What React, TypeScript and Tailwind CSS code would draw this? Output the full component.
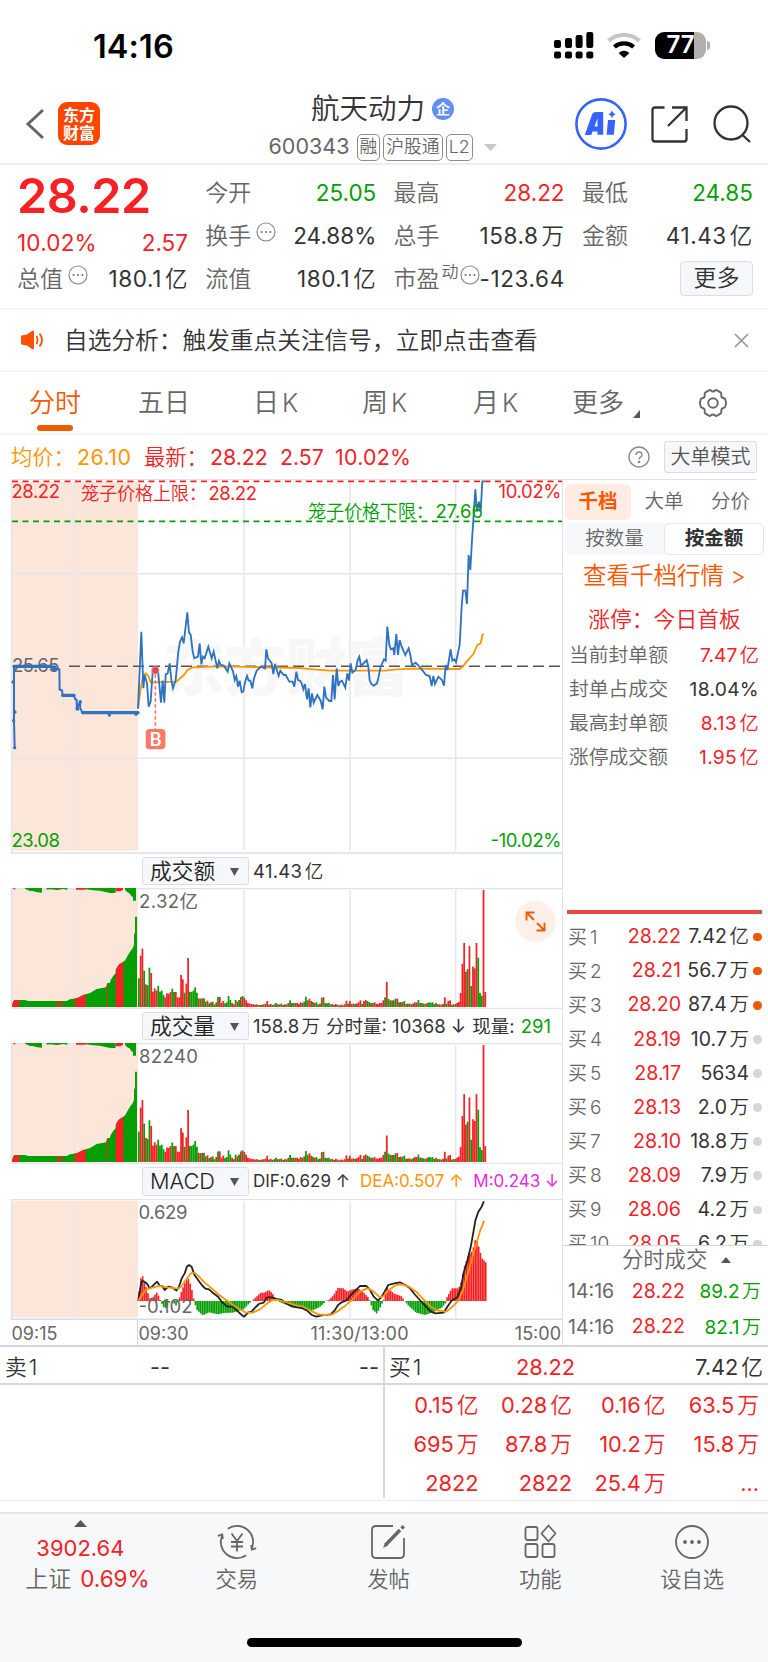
import React from 'react';

const RED = '#f52125';
const GREEN = '#049f04';
const GRID = '#e4e6ee';

const PRICE: number[][] = [
  [414, 836], [424, 605], [430, 775], [434, 735], [441, 760], [446, 830], [452, 815], [458, 725], [466, 712], [474, 722],
  [483, 818], [488, 752], [493, 818], [497, 733], [503, 730], [509, 700], [514, 750], [519, 775], [527, 750], [535, 665],
  [540, 635], [546, 622], [551, 640], [562, 547], [567, 608], [572, 614], [578, 665], [583, 685], [594, 680], [599, 640],
  [604, 703], [609, 680], [614, 685], [625, 650], [635, 685], [641, 665], [652, 715], [657, 693], [662, 705], [672, 707],
  [683, 725], [688, 700], [699, 723], [704, 750], [709, 738], [714, 770], [719, 752], [725, 787], [730, 785], [735, 757],
  [741, 738], [746, 752], [751, 752], [757, 775], [762, 745], [770, 722], [783, 710], [795, 715], [799, 658], [804, 685],
  [815, 700], [820, 732], [825, 702], [836, 738], [841, 722], [851, 735], [857, 735], [868, 755], [878, 755], [883, 770],
  [889, 725], [894, 750], [900, 752], [905, 760], [910, 778], [915, 762], [921, 808], [926, 775], [931, 832], [936, 790],
  [941, 818], [952, 795], [962, 812], [968, 838], [973, 770], [978, 803], [988, 813], [994, 813], [999, 735], [1004, 808],
  [1010, 715], [1015, 768], [1020, 755], [1026, 752], [1036, 773], [1042, 730], [1047, 752], [1052, 700], [1057, 728],
  [1067, 720], [1073, 690], [1078, 680], [1083, 708], [1100, 690], [1105, 710], [1109, 750], [1114, 762], [1121, 767],
  [1131, 760], [1136, 740], [1142, 710], [1152, 688], [1157, 692], [1162, 590], [1168, 645], [1173, 658], [1180, 655],
  [1183, 675], [1189, 612], [1194, 675], [1199, 630], [1205, 650], [1216, 675], [1226, 655], [1231, 675], [1236, 705],
  [1247, 698], [1258, 710], [1268, 722], [1278, 735], [1289, 738], [1295, 768], [1300, 738], [1305, 762], [1315, 740],
  [1326, 750], [1332, 767], [1337, 705], [1342, 720], [1352, 658], [1357, 692], [1363, 688], [1368, 697], [1379, 645],
  [1385, 530], [1389, 482], [1396, 482], [1401, 522], [1406, 375], [1411, 420], [1416, 330], [1422, 240], [1426, 178],
  [1431, 245], [1437, 215], [1442, 245], [1447, 154], [1454, 154],
];

const AVERAGE: number[][] = [
  [414, 836], [422, 775], [430, 735], [437, 730], [446, 740], [452, 757], [530, 755], [540, 745], [552, 735], [562, 720],
  [578, 712], [660, 709], [900, 714], [940, 718], [990, 722], [1050, 722], [1155, 722], [1190, 718], [1240, 716],
  [1380, 717], [1390, 708], [1400, 695], [1420, 672], [1432, 645], [1442, 640], [1447, 615], [1452, 612],
];

const AUCTION: number[][] = [
  [44, 952], [42, 872], [42, 709], [150, 709], [160, 714], [178, 718], [179, 779], [186, 781], [188, 795], [222, 797],
  [226, 808], [230, 810], [231, 836], [240, 815], [241, 836], [248, 848], [414, 849],
];

// One entry per minute: above zero is a rising minute, below zero a falling one.
const MINUTES: number[] = [
  -86, 154, 175, -109, 68, -65, -118, 102, 46, 56, 49, -63, -46, -49, -36, 29, 41, 40, 45, -55,
  -45, 45, 29, 29, 96, 83, -43, 70, 147, -46, -45, -49, -59, -43, 26, -25, 26, -26, -16, 19,
  -11, 14, -16, -8, 14, -30, 30, 12, 18, -11, -14, -33, -21, 12, 8, -21, 16, -21, 30, -33,
  28, 20, 12, 10, 9, 8, 7, 8, -6, 6, 7, -8, 10, 18, -7, 9, -6, 8, -12, -8,
  8, -10, 6, 8, -8, 12, -20, -12, 12, -12, 12, 9, 14, -12, 16, -31, -20, 25, 18, -15,
  12, -14, -8, 10, -28, 29, -12, -11, -12, 8, -9, 6, 9, -7, 5, 7, 5, 8, 19, -10,
  18, 9, 10, -9, 11, 14, 20, -9, 18, 21, -18, -15, 12, -12, 14, 10, 9, 12, 12, 20,
  -29, 75, -24, -20, 20, -20, -25, 25, -14, 15, -15, -18, 9, -10, 10, 8, -11, 14, 14, -21,
  -12, 12, -10, -9, 12, -14, -13, -14, -9, 12, -8, 8, -7, 9, 29, -10, 18, 20, -7, 8,
  -9, 12, 15, 42, 130, 192, 106, -114, 183, -63, 121, 116, 192, -148, -42, -34, 351, 45,
];

const AUCTION_AREA =
  'M36 486 V483 L40 468 L45 465 H75 L85 468 H200 L210 463 L230 460 L240 455 L250 450 L270 444 L290 432 L318 427 L322 414 H330 L332 405 L340 392 L347 385 V375 L352 365 L358 358 L368 352 L376 345 L384 330 L390 320 L398 310 L402 300 V270 L405 262 V215 H411 V486 Z';
const AUCTION_TOP =
  'M75 129 H126 V143 L112 142 L98 138 L90 138 L75 131 Z M140 129 H202 V134 L190 132 L170 135 L150 133 L140 134 Z M257 129 H347 V143 L335 145 L320 142 L300 137 L280 136 L257 133 Z M375 129 H408 V167 H399 V156 L394 154 L390 146 L380 140 L375 134 Z';

const HISTOGRAM: number[][] = [
  [382, 20], [386, 55], [390, 85], [396, 60], [400, 50], [404, 35], [408, 20], [412, 8], [420, 10], [427, 20], [432, 26],
  [438, 12], [442, 0], [450, -18], [458, -22], [463, -8], [470, 0], [480, -8], [485, -14], [492, 3], [500, 30], [507, 50],
  [517, 70], [524, 50], [530, 25], [535, -5], [543, -28], [558, -43], [575, -34], [600, -40], [615, -36], [640, -35],
  [670, -25], [685, -8], [695, 2], [705, 12], [718, 26], [725, 24], [740, 33], [750, 22], [757, 8], [765, 0], [775, -6],
  [800, -16], [830, -20], [860, -28], [880, -18], [890, -8], [896, 0], [905, 3], [918, 18], [930, 39], [945, 38],
  [955, 28], [970, 35], [985, 38], [1000, 26], [1012, 12], [1018, 0], [1025, -25], [1037, -38], [1048, -15], [1056, 5],
  [1065, 40], [1085, 22], [1105, 14], [1113, 0], [1125, -15], [1145, -35], [1170, -42], [1195, -32], [1215, -20],
  [1225, -8], [1230, 12], [1243, 38], [1262, 38], [1270, 60], [1278, 105], [1290, 140], [1300, 150], [1309, 190],
  [1318, 160], [1326, 128], [1340, 112],
];

const DIF: number[][] = [
  [380, 423], [388, 370], [392, 362], [400, 367], [405, 372], [412, 385], [418, 380], [432, 365], [440, 378], [446, 378],
  [453, 390], [463, 380], [475, 383], [485, 392], [492, 382], [500, 355], [508, 340], [514, 320], [520, 315], [527, 320],
  [535, 345], [545, 360], [555, 375], [565, 386], [575, 388], [585, 398], [600, 410], [612, 428], [625, 440], [640, 440],
  [655, 455], [665, 465], [672, 470], [682, 458], [692, 455], [700, 445], [712, 432], [725, 428], [735, 412], [748, 412],
  [760, 417], [775, 420], [790, 432], [805, 440], [830, 444], [845, 452], [858, 465], [870, 470], [885, 466], [910, 463],
  [920, 452], [930, 435], [940, 427], [955, 420], [965, 405], [978, 392], [990, 378], [1008, 378], [1018, 390],
  [1028, 410], [1040, 422], [1050, 410], [1058, 395], [1068, 375], [1085, 370], [1100, 367], [1115, 375], [1128, 385],
  [1140, 402], [1155, 420], [1165, 432], [1175, 443], [1185, 455], [1198, 460], [1220, 458], [1232, 438], [1242, 422],
  [1258, 412], [1268, 385], [1275, 340], [1285, 305], [1295, 260], [1300, 230], [1308, 180], [1316, 155], [1325, 140],
  [1331, 124],
];

const DEA: number[][] = [
  [380, 423], [390, 405], [403, 388], [430, 380], [440, 378], [460, 382], [490, 386], [500, 378], [515, 355], [525, 340],
  [535, 338], [545, 347], [560, 365], [580, 383], [600, 402], [625, 422], [645, 438], [660, 448], [675, 457], [695, 458],
  [715, 448], [735, 430], [750, 420], [765, 420], [790, 427], [815, 436], [835, 440], [855, 452], [875, 463], [895, 465],
  [915, 463], [930, 453], [950, 437], [970, 418], [990, 395], [1010, 385], [1025, 392], [1045, 412], [1055, 408],
  [1070, 390], [1090, 375], [1105, 373], [1125, 380], [1145, 395], [1165, 418], [1185, 440], [1205, 452], [1228, 455],
  [1245, 440], [1262, 420], [1275, 385], [1290, 330], [1305, 270], [1320, 215], [1332, 182],
];

const line = (pts: number[][]) => pts.map((p) => p.join(',')).join(' ');

function valueAt(pts: number[][], x: number) {
  for (let i = 1; i < pts.length; i++) {
    if (x <= pts[i][0]) {
      const [x0, y0] = pts[i - 1];
      const [x1, y1] = pts[i];
      return y0 + ((y1 - y0) * (x - x0)) / (x1 - x0);
    }
  }
  return pts[pts.length - 1][1];
}

/** A figure whose unit (万, 亿) stands a little apart from the digits. */
function Amount({ value }: { value: string }) {
  const unit = value.match(/[万亿]$/)?.[0];
  if (!unit) return <>{value}</>;
  return (
    <>
      {value.slice(0, -1)}
      <span className="ml-[0.13em] font-[350]">{unit}</span>
    </>
  );
}

function Dots({ className = '' }: { className?: string }) {
  return (
    <svg className={className} width="20" height="20" viewBox="0 0 20 20" fill="none">
      <circle cx="10" cy="10" r="9" stroke="#8a8a8a" strokeWidth="1.2" />
      <circle cx="5.6" cy="10" r="1.1" fill="#777" />
      <circle cx="10" cy="10" r="1.1" fill="#777" />
      <circle cx="14.4" cy="10" r="1.1" fill="#777" />
    </svg>
  );
}

function StatusBar() {
  return (
    <div className="flex h-[82px] items-start justify-between pr-[58px] pl-[93px]">
      <div className="mt-[30px] text-[32.500px] leading-[33px] font-semibold tracking-[0.1px] text-black">14:16</div>
      <div className="mt-[31px] flex items-center">
        <svg width="40" height="28" viewBox="0 0 40 28" fill="#000">
          <rect x="0" y="9" width="7" height="8" rx="2" />
          <rect x="11" y="7" width="7" height="10" rx="2" />
          <rect x="21.600" y="4" width="7" height="13" rx="2" />
          <rect x="32.300" y="1" width="7" height="16" rx="2" />
          <rect x="0" y="20.500" width="7" height="7" rx="2" />
          <rect x="11" y="20.500" width="7" height="7" rx="2" />
          <rect x="21.600" y="20.500" width="7" height="7" rx="2" />
          <rect x="32.300" y="20.500" width="7" height="7" rx="2" />
        </svg>
        <svg className="ml-[12px]" width="36" height="28" viewBox="0 0 36 28" fill="none" strokeWidth="4.200">
          <path d="M2.500 9.800 A23 23 0 0 1 33.500 9.800" stroke="#c6c6c6" />
          <path d="M8.400 16 A14.500 14.500 0 0 1 27.600 16" stroke="#000" />
          <path d="M12.600 22 Q18 17.500 23.400 22 L18 27 Z" fill="#000" stroke="none" />
        </svg>
        <div className="ml-[13px] flex items-center">
          <div className="flex h-[27px] w-[51px] items-center justify-center overflow-hidden rounded-[9px] bg-[linear-gradient(to_right,#000_39px,#b0b0b0_39px)] text-[24px] leading-none font-semibold text-white">
            <span className="-mr-[1px]">77</span>
          </div>
          <div className="ml-[1.500px] h-[9px] w-[3px] rounded-r-full bg-[#b0b0b0]" />
        </div>
      </div>
    </div>
  );
}

function Tag({ children }: { children: React.ReactNode }) {
  return (
    <span className="flex h-[27px] items-center rounded-[5px] border border-[#8c8c8c] px-[2px] text-[17.800px] leading-none font-[350] text-[#666]">
      {children}
    </span>
  );
}

function Header() {
  return (
    <div className="flex h-[83px] border-b-2 border-[#ededed] pl-[25px]">
      <svg className="mt-[26px]" width="20" height="32" viewBox="0 0 20 32" fill="none" stroke="#666" strokeWidth="3">
        <path d="M18 2 L3 16 L18 30" />
      </svg>
      <div className="mt-[20px] ml-[13px] flex h-[43px] w-[42px] flex-col items-center justify-center rounded-[9px] bg-[#ff4400] text-[16px] leading-[18px] font-bold text-white">
        <span>东方</span>
        <span>财富</span>
      </div>
      <div className="flex w-[430px] flex-col">
        <div className="mt-[10px] flex h-[34px] items-center pl-[211px]">
          <span className="text-[28.500px] leading-none font-[350] text-[#333]">航天动力</span>
          <span className="ml-[7px] flex h-[22px] w-[22px] items-center justify-center rounded-full bg-[#5f8ff0] text-[14px] leading-none font-bold text-white">
            企
          </span>
        </div>
        <div className="mt-[6px] flex h-[30px] items-center gap-[3px] pl-[168.500px] whitespace-nowrap text-[#666]">
          <span className="mr-[3px] w-[82px] text-[21.500px] leading-none">600343</span>
          <Tag>融</Tag>
          <Tag>沪股通</Tag>
          <Tag>L2</Tag>
          <svg className="ml-[8px]" width="13" height="7" viewBox="0 0 13 7">
            <path d="M0 0 H13 L6.500 7 Z" fill="#c8c8c8" />
          </svg>
        </div>
      </div>
      <div className="mt-[16px] ml-[45px] flex h-[52px] items-center">
        <svg width="52" height="52" viewBox="0 0 52 52">
          <circle cx="26" cy="26" r="24.600" fill="#fff" stroke="#3563ff" strokeWidth="2.600" />
          <path
            d="M9.800 37 L17 16.500 Q18 14 20.500 14 H28.200 V36.800 H22.500 V33.500 H17.500 L16.300 37 Z M19.500 28.500 H22.500 V20.500 Z"
            fill="#3563ff"
            fillRule="evenodd"
          />
          <path d="M33 22 H40.200 L38.800 36.800 H31.600 Z" fill="#3563ff" />
          <path d="M37 12 Q37.600 15.500 41 16.200 Q37.600 17 37 20.500 Q36.400 17 33 16.200 Q36.400 15.500 37 12 Z" fill="#3563ff" />
        </svg>
        <svg className="ml-[24px]" width="37" height="37" viewBox="0 0 37 37" fill="none" stroke="#333" strokeWidth="2.300">
          <path d="M13.500 1.500 H4 Q1.500 1.500 1.500 4 V33 Q1.500 35.500 4 35.500 H33 Q35.500 35.500 35.500 33 V23" />
          <path d="M21 1.500 H35.500 V15 M35 2 L17 20" />
        </svg>
        <svg className="ml-[25px]" width="38" height="38" viewBox="0 0 38 38" fill="none" stroke="#333" strokeWidth="2.300">
          <circle cx="18" cy="18" r="16.500" />
          <path d="M29 29.500 L37 37" />
        </svg>
      </div>
    </div>
  );
}

function Stat({ label, value, color = 'text-[#333]', extra }: { label: string; value: string; color?: string; extra?: React.ReactNode }) {
  return (
    <div className="flex h-[43px] items-center justify-between">
      <div className="flex items-center text-[23px] leading-none font-[350] text-[#666]">
        {label}
        {extra}
      </div>
      <div className={`text-[22.500px] leading-none ${value.includes('1') ? 'tracking-[0.600px]' : ''} ${color}`}>
        <Amount value={value} />
      </div>
    </div>
  );
}

function Quote() {
  return (
    <div className="flex h-[145px] gap-[17.300px] border-b-2 border-[#f5f5f5] pt-[7px] pl-[17px] whitespace-nowrap">
      <div className="w-[171px]">
        <div className="flex h-[52px] items-center pb-[4px] text-[48.500px] leading-none font-semibold tracking-[-0.5px] text-[#f52125]">
          28.22
        </div>
        <div className="flex h-[34px] items-center justify-between pt-[4px] text-[22.500px] leading-none text-[#f52125]">
          <span className="tracking-[0.200px]">10.02%</span>
          <span>2.57</span>
        </div>
        <Stat label="总值" value="180.1亿" extra={<Dots className="-mt-[10px] ml-[5px]" />} />
      </div>
      <div className="w-[171px]">
        <Stat label="今开" value="25.05" color="text-[#049f04]" />
        <Stat label="换手" value="24.88%" extra={<Dots className="-mt-[10px] ml-[5px]" />} />
        <Stat label="流值" value="180.1亿" />
      </div>
      <div className="w-[171px]">
        <Stat label="最高" value="28.22" color="text-[#f52125]" />
        <Stat label="总手" value="158.8万" />
        <Stat
          label="市盈"
          value="-123.64"
          extra={
            <>
              <span className="-mt-[14px] ml-[2px] text-[17px]">动</span>
              <Dots className="-mt-[10px] ml-[1px]" />
            </>
          }
        />
      </div>
      <div className="w-[171px]">
        <Stat label="最低" value="24.85" color="text-[#049f04]" />
        <Stat label="金额" value="41.43亿" />
        <div className="flex h-[41px] items-center justify-end">
          <div className="flex h-[35px] w-[73px] items-center justify-center rounded-[4px] border border-[#d9dde5] bg-[#f6f7fa] text-[23px] leading-none font-[350] text-[#333]">
            更多
          </div>
        </div>
      </div>
    </div>
  );
}

function Notice() {
  return (
    <div className="flex h-[62px] items-center border-b-2 border-[#f5f5f5] pl-[20px]">
      <svg width="24" height="20" viewBox="0 0 24 20" fill="none">
        <path d="M1 6.500 Q1 5.500 2.500 5.300 L7 4.500 L12 1 Q14 0 14 2 V18 Q14 20 12 19 L7 15.500 L2.500 14.700 Q1 14.500 1 13.500 Z" fill="#ff5000" />
        <path d="M16.500 6 Q18.500 10 16.500 14 M19.500 3.500 Q24.500 10 19.500 16.500" stroke="#ff5000" strokeWidth="1.800" />
      </svg>
      <div className="ml-[20px] flex-1 pt-[1px] text-[23.700px] leading-none font-[350] whitespace-nowrap text-[#333]">
        自选分析：触发重点关注信号，立即点击查看
      </div>
      <svg className="mr-[19px]" width="15" height="15" viewBox="0 0 15 15" stroke="#999" strokeWidth="1.700">
        <path d="M1 1 L14 14 M14 1 L1 14" />
      </svg>
    </div>
  );
}

function PeriodTab({ label, className }: { label: string; className: string }) {
  return (
    <div className={`flex shrink-0 justify-center pt-[1px] ${className}`}>
      {label}
      <span className="ml-[3px] text-[25px] leading-[26px]">K</span>
    </div>
  );
}

function Tabs() {
  return (
    <div className="flex h-[63px] items-center border-b-2 border-[#f5f5f5] text-[26px] leading-none font-[350] whitespace-nowrap text-[#666]">
      <div className="flex h-full w-[110px] flex-col items-center pt-[18px] text-[#f05a00]">
        <span>分时</span>
        <span className="mt-[9px] h-[5.500px] w-[36px] rounded-full bg-[#f05a00]" />
      </div>
      <div className="w-[108px] pt-[1px] text-center">五日</div>
      <PeriodTab label="日" className="w-[115px]" />
      <PeriodTab label="周" className="w-[103px]" />
      <PeriodTab label="月" className="w-[119px]" />
      <div className="flex w-[85px] items-end pt-[1px] pl-[17px]">
        更多
        <svg className="-mb-[2px] ml-[9px]" width="7" height="8" viewBox="0 0 7 8">
          <path d="M7 0 V8 H0 Z" fill="#555" />
        </svg>
      </div>
      <svg className="ml-[58px]" width="30" height="30" viewBox="0 0 30 30" fill="none" stroke="#666" strokeWidth="1.900">
        <path d="M10.500 2.600 Q12 1.500 12.800 2.500 Q15 4.600 17.200 2.500 Q18 1.500 19.500 2.600 L22.500 4.300 Q23.600 5 23.300 6.300 Q22.700 9.600 26 10.300 Q27.300 10.600 27.400 12 Q28.800 15 27.400 18 Q27.300 19.400 26 19.700 Q22.700 20.400 23.300 23.700 Q23.600 25 22.500 25.700 L19.500 27.400 Q18 28.500 17.200 27.500 Q15 25.400 12.800 27.500 Q12 28.500 10.500 27.400 L7.500 25.700 Q6.400 25 6.700 23.700 Q7.300 20.400 4 19.700 Q2.700 19.400 2.600 18 Q1.200 15 2.600 12 Q2.700 10.600 4 10.300 Q7.300 9.600 6.700 6.300 Q6.400 5 7.500 4.300 Z" />
        <circle cx="15" cy="15" r="4.800" />
      </svg>
    </div>
  );
}

function InfoRow() {
  return (
    <div className="mr-[11px] ml-[11px] flex h-[45px] items-center border-b border-[#dfe2ea] text-[21.300px] leading-none whitespace-nowrap">
      <div className="flex flex-1 items-center pt-[2px] text-[#f52125]">
        <span className="w-[66px] font-[350] text-[#ff9500]">均价：</span>
        <span className="w-[67px] tracking-[0.500px] text-[#ff9500]">26.10</span>
        <span className="w-[66px] font-[350]">最新：</span>
        <span className="w-[70px]">28.22</span>
        <span className="w-[55px]">2.57</span>
        <span className="tracking-[0.300px]">10.02%</span>
      </div>
      <svg width="22" height="22" viewBox="0 0 22 22" fill="none" stroke="#8a8a8a" strokeWidth="1.400">
        <circle cx="11" cy="11" r="10" />
        <path d="M8 9 Q8 6 11 6 Q14 6 14 8.700 Q14 10.300 12.500 11.200 Q11 12 11 13.500" />
        <circle cx="11" cy="16" r="0.600" fill="#8a8a8a" />
      </svg>
      <div className="ml-[14px] flex h-[32px] w-[93px] items-center justify-center rounded-[3px] border border-[#d9dde5] bg-[#f6f7fa] text-[20px] font-[350] text-[#555]">
        大单模式
      </div>
    </div>
  );
}

function PriceChart() {
  return (
    <svg className="block" width="562" height="374" viewBox="0 480 562 374">
      <rect x="12" y="482" width="126" height="368.700" fill="#fce6da" />
      <g stroke={GRID} strokeWidth="1.500">
        <path d="M11.500 480 V853 M74.700 482 V850.700 M244 482 V850.700 M350 482 V850.700 M455.700 482 V850.700" />
        <path d="M12 573.700 H562 M12 758.300 H562" />
        <path d="M11 853 H562" stroke="#dcdfe8" />
      </g>
      <text x="163" y="691" fontSize="62" fontWeight="900" fill="#f7f7f8" textLength="246">
        东方财富
      </text>
      <path d="M12 481.300 H562" stroke={RED} strokeWidth="1.700" strokeDasharray="6 4.500" />
      <path d="M12 521.300 H562" stroke={GREEN} strokeWidth="1.700" strokeDasharray="6 4.500" />
      <text x="12" y="672" fontSize="18.500" fill="#666" textLength="47.500">
        25.65
      </text>
      <path d="M69 666.300 H562" stroke="#555" strokeWidth="1.500" strokeDasharray="11 5" />
      <g transform="translate(0 430) scale(0.33333)" fill="none" strokeLinejoin="round">
        <polyline points={line(AVERAGE)} stroke="#ff9500" strokeWidth="5.500" />
        <polyline points={line(PRICE)} stroke="#2f72c2" strokeWidth="5.500" strokeLinejoin="miter" />
        <polyline points={line(AUCTION)} stroke="#2f72c2" strokeWidth="6" />
        <path d="M42 709 H152 M188 796 H222 M248 848 H414" stroke="#2f72c2" strokeWidth="10" strokeLinecap="round" />
        <g fill="#2f72c2">
          <circle cx="39" cy="756" r="5" />
          <circle cx="45" cy="846" r="5" />
          <circle cx="41" cy="872" r="5" />
          <circle cx="44" cy="953" r="5" />
          <circle cx="328" cy="855" r="5" />
          <circle cx="408" cy="853" r="5" />
          <circle cx="232" cy="836" r="6" />
          <circle cx="241" cy="815" r="5" />
          <circle cx="162" cy="714" r="8" />
        </g>
        <path d="M466 733 V897" stroke="#f5746a" strokeWidth="5" strokeDasharray="10 8" />
        <circle cx="466" cy="721" r="11" fill="#e0484c" stroke="#f0908c" strokeWidth="3" />
      </g>
      <rect x="145.700" y="729" width="19.700" height="20.300" rx="4" fill="#ff7767" />
      <text x="155.600" y="745.500" fontSize="18" fontWeight="600" fill="#fff" textAnchor="middle">
        B
      </text>
      <text x="11.500" y="498" fontSize="18.500" fill={RED} textLength="48.500">
        28.22
      </text>
      <text x="81" y="499.500" fontSize="18.200" fill={RED} textLength="126" fontWeight="350">
        笼子价格上限：
      </text>
      <text x="208.500" y="499.500" fontSize="18.500" fill={RED} textLength="48.500">
        28.22
      </text>
      <text x="308" y="518" fontSize="18.200" fill={GREEN} textLength="126" fontWeight="350">
        笼子价格下限：
      </text>
      <text x="435.500" y="518" fontSize="18.500" fill={GREEN} textLength="47.500">
        27.66
      </text>
      <text x="561.500" y="498" fontSize="18.500" fill={RED} textAnchor="end" textLength="63">
        10.02%
      </text>
      <text x="11.500" y="846.500" fontSize="18.500" fill={GREEN} textLength="48.500">
        23.08
      </text>
      <text x="561.500" y="846.500" fontSize="18.500" fill={GREEN} textAnchor="end" textLength="71">
        -10.02%
      </text>
    </svg>
  );
}

function IndicatorBar({ name, height, children }: { name: string; height: string; children: React.ReactNode }) {
  return (
    <div className={`flex items-center pl-[142px] whitespace-nowrap ${height}`}>
      <div className="flex h-[28.500px] w-[107px] shrink-0 items-center rounded-[3px] border border-[#d9dde5] bg-[#f6f7fa] pt-[1px] pr-[9px] pl-[7px] text-[21.700px] leading-none font-[350] text-[#222]">
        <span className="flex-1">{name}</span>
        <svg width="9" height="8" viewBox="0 0 9 8">
          <path d="M0 0 H9 L4.500 8 Z" fill="#555" />
        </svg>
      </div>
      <div className="flex items-center pl-[4px] text-[18.500px] leading-none text-[#333]">{children}</div>
    </div>
  );
}

function VolumeChart({ id, label, factor }: { id: string; label: string; factor: number }) {
  return (
    <svg className="block" width="562" height="121" viewBox="0 888 562 121">
      <rect x="12" y="888.500" width="126" height="119" fill="#fce6da" />
      <g stroke={GRID} strokeWidth="1.500">
        <path d="M11 888.500 H562 M11.500 888 V1009" stroke="#dfe2ea" />
        <path d="M74.700 889 V1007 M244 890 V1007 M350 890 V1007 M455.700 890 V1007" />
        <path d="M11 1008.500 H562" />
      </g>
      <g transform="translate(0 845) scale(0.33333)">
        <clipPath id={id}>
          <path d={AUCTION_AREA} />
        </clipPath>
        <path d={AUCTION_AREA} fill={GREEN} />
        <g clipPath={`url(#${id})`} fill={RED}>
          <rect x="36" y="200" width="21" height="290" />
          <rect x="172" y="200" width="8" height="290" />
          <rect x="187" y="200" width="3" height="290" />
          <rect x="225" y="200" width="32" height="290" />
          <rect x="320" y="200" width="3" height="290" />
          <rect x="347" y="200" width="23" height="290" />
        </g>
        <path d={AUCTION_TOP} fill={GREEN} />
        <path d="M228 129 H257 V134 H228 Z M347 129 H369 V135 L360 139 H347 Z M172 129 H178 V134 H172 Z M40 129 H46 V133 H40 Z" fill={RED} />
        {MINUTES.map((v, i) => {
          const h = Math.min(351, Math.abs(v) * factor);
          return <rect key={i} x={414 + i * 5.275} y={486 - h} width="5.300" height={h} fill={v > 0 ? RED : GREEN} />;
        })}
      </g>
      <text x="139" y="908" fontSize="18.500" fill="#666" letterSpacing="0.400" fontWeight="370">
        {label}
      </text>
    </svg>
  );
}

function MacdChart() {
  return (
    <svg className="block" width="562" height="121" viewBox="0 1199 562 121">
      <rect x="12" y="1200.500" width="126" height="117" fill="#fce6da" />
      <g stroke={GRID} strokeWidth="1.500">
        <path d="M11 1199.300 H562 M11.500 1199 V1320" stroke="#dfe2ea" />
        <path d="M74.700 1201 V1318 M244 1201 V1318 M350 1201 V1318 M455.700 1201 V1318" />
        <path d="M11 1319.300 H562" stroke="#d9dce6" />
      </g>
      <g transform="translate(0 1160) scale(0.36352 0.33333)" fill="none">
        {MINUTES.map((_, i) => {
          const x = 380.5 + i * 4.84;
          const v = valueAt(HISTOGRAM, x + 2.4);
          return (
            <rect key={i} x={x} y={v > 0 ? 423 - v : 423} width="4.500" height={Math.abs(v)} fill={v > 0 ? RED : GREEN} />
          );
        })}
        <polyline points={line(DIF)} stroke="#222" strokeWidth="1.800" strokeLinejoin="round" vectorEffect="non-scaling-stroke" />
        <polyline points={line(DEA)} stroke="#ff9500" strokeWidth="1.800" strokeLinejoin="round" vectorEffect="non-scaling-stroke" />
      </g>
      <text x="138.500" y="1219" fontSize="18.500" fill="#666" textLength="49">
        0.629
      </text>
      <text x="138.500" y="1312.500" fontSize="18.500" fill="#666" textLength="54">
        -0.102
      </text>
    </svg>
  );
}

function Charts() {
  return (
    <div className="relative w-[562px]">
      <PriceChart />
      <IndicatorBar name="成交额" height="h-[34px]">
        <span className="tracking-[0.300px]">
          <Amount value="41.43亿" />
        </span>
      </IndicatorBar>
      <VolumeChart id="auction-amount" label="2.32亿" factor={1} />
      <IndicatorBar name="成交量" height="h-[34px]">
        <span>
          <Amount value="158.8万" />
        </span>
        <span className="ml-[6px]">分时量: 10368 ↓</span>
        <span className="ml-[6px]">现量:</span>
        <span className="ml-[6px] text-[#049f04]">291</span>
      </IndicatorBar>
      <VolumeChart id="auction-volume" label="82240" factor={1.06} />
      <IndicatorBar name="MACD" height="h-[35px]">
        <span className="text-[17px]">DIF:0.629 ↑</span>
        <span className="ml-[10px] text-[17px] text-[#ff9500]">DEA:0.507 ↑</span>
        <span className="ml-[10px] text-[17px] text-[#e22be2]">M:0.243 ↓</span>
      </IndicatorBar>
      <MacdChart />
      <div className="flex h-[26px] items-center pl-[11.500px] text-[18px] leading-none text-[#666]">
        <div className="flex h-full w-[126px] items-center border-r border-[#d4d7de] pt-[1px]">09:15</div>
        <div className="w-[173px] pt-[2px] pl-[1px]">09:30</div>
        <div className="flex-1 pt-[2px] tracking-[0.300px]">11:30/13:00</div>
        <div className="pt-[2px] pr-[1px]">15:00</div>
      </div>
      <div className="absolute top-[421px] left-[515px] flex h-[41px] w-[41px] items-center justify-center rounded-full bg-[#fdf0ea]">
        <svg width="21" height="21" viewBox="0 0 21 21" fill="none" stroke="#f05a00" strokeWidth="1.900">
          <path d="M1.500 9.500 V1.500 H9.500 M1.500 1.500 L9 9 M19.500 11.500 V19.500 H11.500 M19.500 19.500 L12 12" />
        </svg>
      </div>
    </div>
  );
}

const SEALS = [
  ['当前封单额', '7.47亿', 'text-[#f52125]'],
  ['封单占成交', '18.04%', 'text-[#333]'],
  ['最高封单额', '8.13亿', 'text-[#f52125]'],
  ['涨停成交额', '1.95亿', 'text-[#f52125]'],
];

const BIDS = [
  ['1', '28.22', '7.42亿'],
  ['2', '28.21', '56.7万'],
  ['3', '28.20', '87.4万'],
  ['4', '28.19', '10.7万'],
  ['5', '28.17', '5634'],
  ['6', '28.13', '2.0万'],
  ['7', '28.10', '18.8万'],
  ['8', '28.09', '7.9万'],
  ['9', '28.06', '4.2万'],
  ['10', '28.05', '6.2万'],
];

function SidePanel() {
  return (
    <div className="flex w-[206px] flex-col border-l border-[#dfe2ea] leading-none whitespace-nowrap [&>*]:shrink-0">
      <div className="mt-[4px] ml-[2px] flex h-[36px] w-[199px] items-center text-[19.500px] font-[350] text-[#666]">
        <div className="flex h-full w-[66px] items-center justify-center rounded-[6px] bg-[#ffece2] font-bold text-[#ff5500]">千档</div>
        <div className="w-[66px] text-center">大单</div>
        <div className="w-[67px] text-center">分价</div>
      </div>
      <div className="mt-[3px] ml-[2px] flex h-[32px] w-[199px] items-center rounded-[6px] bg-[#f6f7fa] text-[19.500px] font-[350] text-[#666]">
        <div className="w-[99px] text-center">按数量</div>
        <div className="flex h-full w-[100px] items-center justify-center rounded-[6px] border border-[#e6e6ea] bg-white font-bold text-[#333]">
          按金额
        </div>
      </div>
      <div className="flex h-[42px] items-center justify-center pr-[2px] text-[23.500px] font-[350] text-[#ff5500]">查看千档行情 &gt;</div>
      <div className="flex h-[42px] items-center justify-center pt-[4px] pr-[2px] text-[21.800px] font-[350] text-[#f52125]">涨停：今日首板</div>
      <div className="h-[136px] pr-[9px] pl-[6px]">
        {SEALS.map(([label, value, color]) => (
          <div key={label} className="flex h-[34px] items-center justify-between">
            <span className="text-[19.800px] font-[350] text-[#666]">{label}</span>
            <span className={`text-[19.200px] ${value.includes('1') ? 'tracking-[0.300px]' : ''} ${color}`}>
              <Amount value={value} />
            </span>
          </div>
        ))}
      </div>
      <div className="mt-[135px] ml-[4px] h-[4px] w-[195px] bg-[#ea4545]" />
      <div className="mt-[6px] h-[325px] overflow-hidden pl-[5px]">
        {BIDS.map(([level, price, qty], i) => (
          <div key={level} className="flex h-[34.100px] items-center">
            <span className="w-[46px] text-[19px] font-[350] text-[#666]">
              买<span className="ml-[3px]">{level}</span>
            </span>
            <span className="w-[67px] text-right text-[19.600px] text-[#f52125]">{price}</span>
            <span className="w-[68px] text-right text-[19.500px] text-[#333]">
              <Amount value={qty} />
            </span>
            <span className={`ml-[4px] h-[8.600px] w-[8.600px] rounded-full ${i < 3 ? 'bg-[#eb5a00]' : 'bg-[#d3d6dc]'}`} />
          </div>
        ))}
      </div>
      <div className="flex h-[29px] items-center border-t border-[#d4d7de] pl-[59px] text-[21.300px] font-[350] text-[#666]">
        分时成交
        <svg className="ml-[14px]" width="10" height="6" viewBox="0 0 10 6">
          <path d="M0 6 H10 L5 0 Z" fill="#555" />
        </svg>
      </div>
      {['89.2万', '82.1万'].map((qty) => (
        <div key={qty} className="flex h-[35.500px] items-center pl-[5px]">
          <span className="w-[56px] text-[19.500px] text-[#666]">14:16</span>
          <span className="w-[61px] text-right text-[19.600px] text-[#f52125]">28.22</span>
          <span className="w-[76px] text-right text-[19px] text-[#049f04]">
            <Amount value={qty} />
          </span>
        </div>
      ))}
    </div>
  );
}

const QUEUE = [
  ['0.15亿', '0.28亿', '0.16亿', '63.5万'],
  ['695万', '87.8万', '10.2万', '15.8万'],
  ['2822', '2822', '25.4万', '...'],
];

function OrderQueue() {
  return (
    <div className="flex h-[156px] border-t-2 border-b border-t-[#d4d7de] border-b-[#e8eaef] text-[21.800px] leading-none whitespace-nowrap text-[#333]">
      <div className="w-[383px] pb-[2px]">
        <div className="flex h-[38px] items-center border-b-2 border-[#d4d7de] pt-[5px] pr-[4px] pl-[5px]">
          <span className="w-[145px] font-[350]">
            卖<span className="ml-[2px]">1</span>
          </span>
          <span className="flex-1">--</span>
          <span>--</span>
        </div>
      </div>
      <div className="mb-[2px] flex-1 border-l-2 border-[#d4d7de]">
        <div className="flex h-[38px] items-center border-b-2 border-[#d4d7de] pt-[5px] pr-[5px] pl-[4px]">
          <span className="w-[127px] font-[350]">
            买<span className="ml-[2px]">1</span>
          </span>
          <span className="flex-1 text-[#f52125]">28.22</span>
          <span>
            <Amount value="7.42亿" />
          </span>
        </div>
        <div className="grid grid-cols-4 pr-[9px] text-[#f52125]">
          {QUEUE.flat().map((v, i) => (
            <div key={i} className="flex h-[39px] items-center justify-end pt-[3px]">
              <Amount value={v} />
            </div>
          ))}
        </div>
      </div>
    </div>
  );
}

function NavItem({ label, children }: { label: string; children: React.ReactNode }) {
  return (
    <div className="flex w-[152px] flex-col items-center pt-[10px] text-[21.300px] leading-none font-[350] text-[#666]">
      <svg width="40" height="36" viewBox="0 0 40 36" fill="none" stroke="#666" strokeWidth="1.800">
        {children}
      </svg>
      <span className="mt-[9px]">{label}</span>
    </div>
  );
}

function BottomNav() {
  return (
    <div className="mt-[11px] flex flex-1 flex-col border-t-2 border-[#e4e6eb] bg-[#f7f8fa]">
      <div className="flex whitespace-nowrap">
        <div className="flex w-[161px] flex-col items-center pt-[6px] text-[22px] leading-none text-[#f52125]">
          <svg width="13" height="7" viewBox="0 0 13 7">
            <path d="M0 7 H13 L6.500 0 Z" fill="#555" />
          </svg>
          <span className="mt-[10px]">3902.64</span>
          <div className="mt-[9px] flex items-center gap-[9px] pl-[14px]">
            <span className="text-[23px] font-[350] text-[#666]">上证</span>
            <span className="text-[22.500px]">0.69%</span>
          </div>
        </div>
        <NavItem label="交易">
          <path d="M10.800 4.800 A16.200 16.200 0 0 1 35 24.300 M29.200 31.200 A16.200 16.200 0 0 1 5 11.700" />
          <path d="M0.800 11.800 L5.200 10.500 L5.800 15 M39.200 24.200 L34.800 25.500 L34.200 21" />
          <path d="M14.500 9.500 L20 17 L25.500 9.500 M20 17 V27.500 M14 18 H26 M14 22.500 H26" />
        </NavItem>
        <NavItem label="发帖">
          <path d="M25 2 H8 Q4 2 4 6 V30 Q4 34 8 34 H32 Q36 34 36 30 V14" />
          <path d="M17.500 21 L32 6 M33.500 4.500 L35.800 2.200" strokeWidth="3.400" />
          <path d="M15 24 L17 19 L20 21.500 Z" fill="#666" stroke="none" />
        </NavItem>
        <NavItem label="功能">
          <rect x="5.500" y="3" width="12" height="13" rx="2" />
          <rect x="5.500" y="20" width="12" height="13" rx="2" />
          <rect x="22.500" y="20" width="12" height="13" rx="2" />
          <path d="M28.500 1.500 L35.500 9.500 L28.500 17.500 L21.500 9.500 Z" strokeLinejoin="round" />
        </NavItem>
        <NavItem label="设自选">
          <circle cx="20" cy="18" r="16" />
          <g fill="#666" stroke="none">
            <circle cx="13" cy="18" r="1.900" />
            <circle cx="20" cy="18" r="1.900" />
            <circle cx="27" cy="18" r="1.900" />
          </g>
        </NavItem>
      </div>
      <div className="mt-auto mb-[15px] ml-[247px] h-[9px] w-[275px] rounded-full bg-black" />
    </div>
  );
}

export default function App() {
  return (
    <div className="flex h-[1662px] w-[768px] flex-col overflow-hidden bg-white font-['Inter','Noto_Sans_CJK_SC',sans-serif]">
      <StatusBar />
      <Header />
      <Quote />
      <Notice />
      <Tabs />
      <InfoRow />
      <div className="flex h-[865px]">
        <Charts />
        <SidePanel />
      </div>
      <OrderQueue />
      <BottomNav />
    </div>
  );
}
